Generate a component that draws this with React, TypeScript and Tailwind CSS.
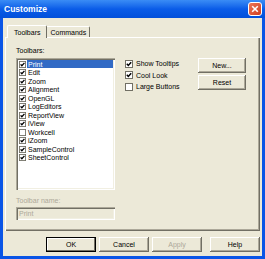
import React from 'react';

const toolbars: [string, boolean][] = [
  ['Print', true],
  ['Edit', true],
  ['Zoom', true],
  ['Alignment', true],
  ['OpenGL', true],
  ['LogEditors', true],
  ['ReportView', true],
  ['iView', true],
  ['Workcell', false],
  ['iZoom', true],
  ['SampleControl', true],
  ['SheetControl', true],
];

function Check({ on, size = 7 }: { on: boolean; size?: number }) {
  return (
    <svg width={size} height={size} viewBox="0 0 8 8" className="shrink-0">
      <rect x="0.5" y="0.5" width="7" height="7" fill="#fff" stroke="#716F64" />
      {on && <polyline points="1.8,3.8 3.3,5.4 6.2,2.2" fill="none" stroke="#000" strokeWidth="1.5" />}
    </svg>
  );
}

function Btn({ label, primary, disabled, w = 'w-[50px]' }: { label: string; primary?: boolean; disabled?: boolean; w?: string }) {
  return (
    <div
      className={`${w} h-[15px] flex items-center justify-center bg-[#ECE9D8] ${
        primary
          ? 'shadow-[inset_0_0_0_1px_#000,inset_-2px_-2px_0_#716F64,inset_2px_2px_0_#fff]'
          : 'shadow-[inset_-1px_-1px_0_#716F64,inset_1px_1px_0_#fff,inset_-2px_-2px_0_#ACA899]'
      } ${disabled ? 'text-[#ACA899]' : 'text-black'}`}
    >
      {label}
    </div>
  );
}

export default function App() {
  return (
    <div className="w-[265px] h-[259px] flex flex-col bg-[#0A55E6] font-['Liberation_Sans',Arial,sans-serif] text-[7px] leading-none text-black select-none">
      {/* title bar */}
      <div className="h-[18px] flex items-center pl-[4px] pr-[3px] bg-gradient-to-b from-[#3A8CF5] via-[#0A5CE8] to-[#0250DA]">
        <span className="text-white font-bold text-[8.5px]">Customize</span>
        <div className="ml-auto w-[14px] h-[14px] rounded-[3px] border border-white bg-gradient-to-br from-[#EC7555] to-[#D03C1C] flex items-center justify-center">
          <svg width="8" height="8" viewBox="0 0 8 8">
            <path d="M1.2 1.2 L6.8 6.8 M6.8 1.2 L1.2 6.8" stroke="#fff" strokeWidth="1.6" />
          </svg>
        </div>
      </div>

      {/* client area */}
      <div className="flex-1 mx-[3px] mb-[3px] bg-[#ECE9D8] flex flex-col px-[2px]">
        <div className="h-[19px] flex items-end pl-[2px]">
          <div className="h-[13px] px-[6px] flex items-center bg-[#ECE9D8] border-l border-t border-white border-r border-r-[#716F64] rounded-t-[2px] relative z-10 -mb-px">
            Toolbars
          </div>
          <div className="h-[11px] px-[3px] flex items-center border-t border-white border-r border-r-[#716F64] rounded-tr-[2px]">
            Commands
          </div>
        </div>

        <div className="h-[194px] border-l border-t border-white shadow-[inset_-1px_-1px_0_#716F64,inset_-2px_-2px_0_#ACA899] flex pl-[10px] pt-[8px] pr-[14px]">
          <div className="w-[99px] flex flex-col">
            <div className="h-[9px] flex items-center">Toolbars:</div>
            <div className="mt-[3px] h-[132px] bg-white p-[2px] shadow-[inset_1px_1px_0_#ACA899,inset_2px_2px_0_#716F64,inset_-1px_-1px_0_#fff,inset_-2px_-2px_0_#F1EFE2]">
              {toolbars.map(([name, on], i) => (
                <div key={name} className="h-[8.5px] flex items-center pl-[1px]">
                  <Check on={on} />
                  <span className={`ml-[1px] h-[8px] flex items-center px-[1px] ${i === 0 ? 'flex-1 bg-[#316AC5] text-white' : ''}`}>
                    {name}
                  </span>
                </div>
              ))}
            </div>
            <div className="mt-[6px] h-[9px] flex items-center text-[#ACA899]">Toolbar name:</div>
            <div className="mt-[2px] h-[13px] flex items-center pl-[3px] text-[#ACA899] shadow-[inset_1px_1px_0_#ACA899,inset_2px_2px_0_#716F64,inset_-1px_-1px_0_#fff,inset_-2px_-2px_0_#F1EFE2]">
              Print
            </div>
          </div>

          <div className="ml-[10px] pt-[12px] flex flex-col">
            {[
              ['Show Tooltips', true],
              ['Cool Look', true],
              ['Large Buttons', false],
            ].map(([label, on]) => (
              <div key={label as string} className="h-[11.5px] flex items-center gap-[3px]">
                <Check on={on as boolean} size={8} />
                <span>{label as string}</span>
              </div>
            ))}
          </div>

          <div className="ml-auto pt-[12px] flex flex-col gap-[2px]">
            <Btn label="New..." w="w-[48px]" />
            <Btn label="Reset" w="w-[48px]" />
          </div>
        </div>

        <div className="flex justify-end gap-[3px] mt-[6px]">
          <Btn label="OK" primary />
          <Btn label="Cancel" />
          <Btn label="Apply" disabled />
          <div className="w-[2px]" />
          <Btn label="Help" />
        </div>
      </div>
    </div>
  );
}
